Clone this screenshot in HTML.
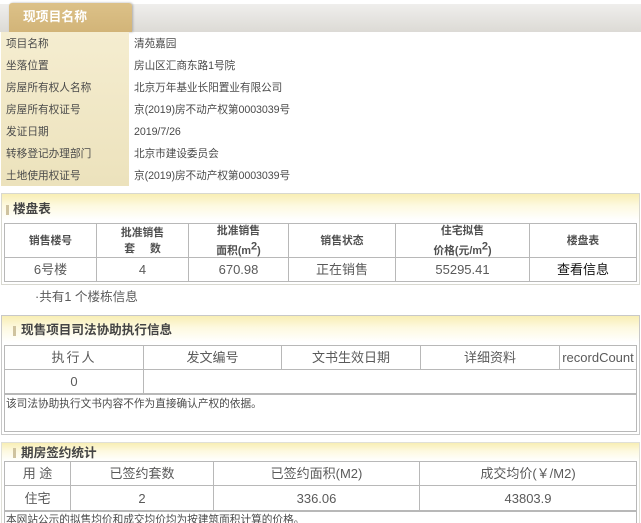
<!DOCTYPE html>
<html lang="zh">
<head>
<meta charset="utf-8">
<style>
html,body{margin:0;padding:0;background:#fff}
#p{position:relative;width:641px;height:523px;overflow:hidden;background:#fff;font-family:"Liberation Sans","Noto Sans CJK SC",sans-serif;color:#5a5a5a;filter:blur(.35px)}
#p div{position:absolute;box-sizing:border-box;white-space:nowrap}
.l{font-size:10.67px;line-height:22px;height:22px;left:6px;color:#4a4a4a}
.v{font-size:10.67px;line-height:22px;height:22px;left:134px;color:#4a4a4a;letter-spacing:-.07px}
.h{background:#b8b8b8}
.c{text-align:center;font-size:13px;line-height:20px;height:20px;color:#5a5a5a}
.b{text-align:center;font-size:10.8px;line-height:16px;height:16px;color:#505050;font-weight:bold}
.panel{border:1px solid #d8d8d0;background:#fff}
.grad{background:linear-gradient(#f8eeb4,#fdf9e0 45%,#fff)}
.t{font-weight:bold;color:#444;font-size:12.6px;line-height:16px;height:16px}
.m{background:#cfc39f;width:3px;height:10px}
sup{font-size:11px;line-height:0}
</style>
</head>
<body>
<div id="p">
<!-- top -->
<div style="left:0;top:4px;width:641px;height:28px;background:linear-gradient(#efeeec,#dcdad5)"></div>
<div style="left:9px;top:3px;width:123px;height:29px;background:linear-gradient(#dcc188,#d2b478);border-radius:3px 3px 0 0;box-shadow:1px 0 2px #aaa"></div>
<div style="left:23px;top:8px;font-size:12.8px;line-height:18px;font-weight:bold;color:#fff">现项目名称</div>
<div style="left:1px;top:32px;width:128px;height:154px;background:linear-gradient(#f5edd0,#ece2bc)"></div>
<div class="l" style="top:33px">项目名称</div><div class="v" style="top:33px">清苑嘉园</div>
<div class="l" style="top:55px">坐落位置</div><div class="v" style="top:55px">房山区汇商东路1号院</div>
<div class="l" style="top:77px">房屋所有权人名称</div><div class="v" style="top:77px">北京万年基业长阳置业有限公司</div>
<div class="l" style="top:99px">房屋所有权证号</div><div class="v" style="top:99px">京(2019)房不动产权第0003039号</div>
<div class="l" style="top:121px">发证日期</div><div class="v" style="top:121px">2019/7/26</div>
<div class="l" style="top:143px">转移登记办理部门</div><div class="v" style="top:143px">北京市建设委员会</div>
<div class="l" style="top:165px">土地使用权证号</div><div class="v" style="top:165px">京(2019)房不动产权第0003039号</div>

<!-- section 1 -->
<div class="panel" style="left:1px;top:193px;width:639px;height:92px"></div>
<div class="grad" style="left:2px;top:194px;width:637px;height:26px"></div>
<div class="m" style="left:6px;top:205px"></div>
<div class="t" style="left:13px;top:201px">楼盘表</div>
<div class="h" style="left:4px;top:223px;width:633px;height:1px"></div>
<div class="h" style="left:4px;top:257px;width:633px;height:1px"></div>
<div class="h" style="left:4px;top:281px;width:633px;height:1px"></div>
<div class="h" style="left:4px;top:223px;width:1px;height:59px"></div>
<div class="h" style="left:96px;top:223px;width:1px;height:59px"></div>
<div class="h" style="left:188px;top:223px;width:1px;height:59px"></div>
<div class="h" style="left:288px;top:223px;width:1px;height:59px"></div>
<div class="h" style="left:395px;top:223px;width:1px;height:59px"></div>
<div class="h" style="left:529px;top:223px;width:1px;height:59px"></div>
<div class="h" style="left:636px;top:223px;width:1px;height:59px"></div>
<div class="b" style="left:5px;width:91px;top:233px">销售楼号</div>
<div class="b" style="left:97px;width:91px;top:225px">批准销售</div>
<div class="b" style="left:97px;width:91px;top:241px;white-space:pre">套     数</div>
<div class="b" style="left:189px;width:99px;top:223px">批准销售</div>
<div class="b" style="left:189px;width:99px;top:243px">面积(m<sup>2</sup>)</div>
<div class="b" style="left:289px;width:106px;top:233px">销售状态</div>
<div class="b" style="left:396px;width:133px;top:223px">住宅拟售</div>
<div class="b" style="left:396px;width:133px;top:243px">价格(元/m<sup>2</sup>)</div>
<div class="b" style="left:530px;width:106px;top:233px">楼盘表</div>
<div class="c" style="left:5px;width:91px;top:260px">6号楼</div>
<div class="c" style="left:97px;width:91px;top:260px">4</div>
<div class="c" style="left:189px;width:99px;top:260px">670.98</div>
<div class="c" style="left:289px;width:106px;top:260px">正在销售</div>
<div class="c" style="left:396px;width:133px;top:260px">55295.41</div>
<div class="c" style="left:530px;width:106px;top:260px;color:#111">查看信息</div>
<div style="left:35px;top:287px;font-size:12.6px;line-height:20px;color:#5a5a5a">·共有1 个楼栋信息</div>

<!-- section 2 -->
<div class="panel" style="left:1px;top:315px;width:639px;height:120px;border-color:#c8c8c8"></div>
<div class="grad" style="left:2px;top:316px;width:637px;height:26px"></div>
<div class="m" style="left:13px;top:326px"></div>
<div class="t" style="left:21px;top:322px">现售项目司法协助执行信息</div>
<div class="h" style="left:4px;top:345px;width:633px;height:1px"></div>
<div class="h" style="left:4px;top:369px;width:633px;height:1px"></div>
<div class="h" style="left:4px;top:393px;width:633px;height:2px"></div>
<div class="h" style="left:4px;top:431px;width:633px;height:1px"></div>
<div class="h" style="left:4px;top:345px;width:1px;height:87px"></div>
<div class="h" style="left:636px;top:345px;width:1px;height:87px"></div>
<div class="h" style="left:143px;top:345px;width:1px;height:48px"></div>
<div class="h" style="left:281px;top:345px;width:1px;height:24px"></div>
<div class="h" style="left:420px;top:345px;width:1px;height:24px"></div>
<div class="h" style="left:559px;top:345px;width:1px;height:24px"></div>
<div class="c" style="left:5px;width:138px;top:348px;letter-spacing:2px">执行人</div>
<div class="c" style="left:144px;width:137px;top:348px">发文编号</div>
<div class="c" style="left:282px;width:138px;top:348px">文书生效日期</div>
<div class="c" style="left:421px;width:138px;top:348px">详细资料</div>
<div class="c" style="left:560px;width:76px;top:348px">recordCount</div>
<div class="c" style="left:5px;width:138px;top:372px">0</div>
<div style="left:6px;top:397px;font-size:10.67px;line-height:14px;color:#4a4a4a">该司法协助执行文书内容不作为直接确认产权的依据。</div>

<!-- section 3 -->
<div class="panel" style="left:1px;top:442px;width:639px;height:81px;border-color:#e0e0d8;border-bottom:0"></div>
<div class="grad" style="left:2px;top:443px;width:637px;height:18px"></div>
<div class="m" style="left:13px;top:448px"></div>
<div class="t" style="left:21px;top:445px">期房签约统计</div>
<div class="h" style="left:4px;top:461px;width:633px;height:1px"></div>
<div class="h" style="left:4px;top:485px;width:633px;height:1px"></div>
<div class="h" style="left:4px;top:510px;width:633px;height:2px"></div>
<div class="h" style="left:4px;top:461px;width:1px;height:62px"></div>
<div class="h" style="left:636px;top:461px;width:1px;height:62px"></div>
<div class="h" style="left:70px;top:461px;width:1px;height:49px"></div>
<div class="h" style="left:213px;top:461px;width:1px;height:49px"></div>
<div class="h" style="left:419px;top:461px;width:1px;height:49px"></div>
<div class="c" style="left:5px;width:65px;top:464px;white-space:pre">用 途</div>
<div class="c" style="left:71px;width:142px;top:464px">已签约套数</div>
<div class="c" style="left:214px;width:205px;top:464px">已签约面积(M2)</div>
<div class="c" style="left:420px;width:216px;top:464px">成交均价(￥/M2)</div>
<div class="c" style="left:5px;width:65px;top:489px">住宅</div>
<div class="c" style="left:71px;width:142px;top:489px">2</div>
<div class="c" style="left:214px;width:205px;top:489px">336.06</div>
<div class="c" style="left:420px;width:216px;top:489px">43803.9</div>
<div style="left:6px;top:513px;font-size:10.67px;line-height:14px;color:#4a4a4a">本网站公示的拟售均价和成交均价均为按建筑面积计算的价格。</div>
</div>
</body>
</html>
